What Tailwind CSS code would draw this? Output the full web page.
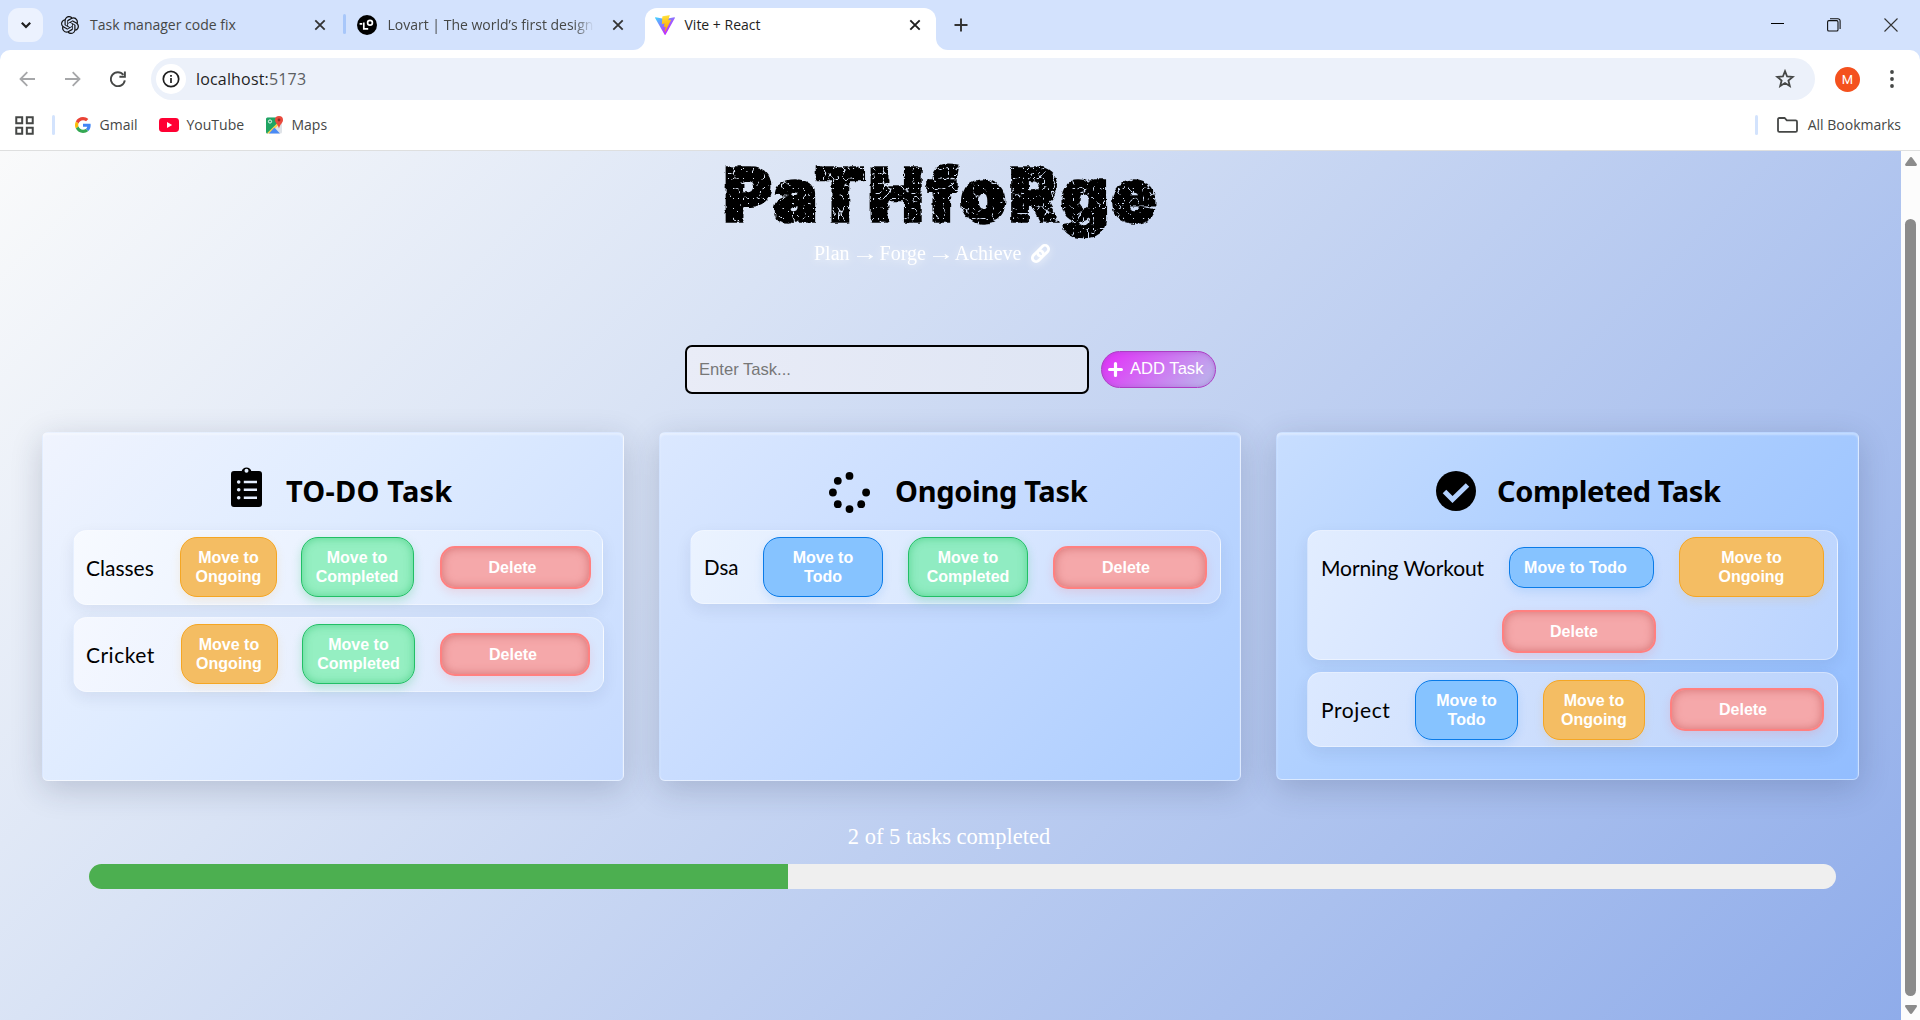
<!DOCTYPE html>
<html lang="en">
<head>
<meta charset="utf-8">
<title>Vite + React</title>
<script src="https://cdn.jsdelivr.net/npm/@tailwindcss/browser@4"></script>
</head>
<body class="w-[1920px] h-[1020px] overflow-hidden flex flex-col bg-[#d3e2fd] text-black font-['Open_Sans',sans-serif]">

<!-- Tab strip -->
<header class="h-[50px] shrink-0 flex text-[14px] leading-5 text-[#454746]">
  <button class="ml-2 mt-2 w-[35px] h-[34px] rounded-[11px] bg-[#ecf2fe] grid place-items-center">
    <svg class="w-4 h-4" viewBox="0 0 16 16" fill="none" stroke="#1f1f1f" stroke-width="2.2"><path d="M3.8 5.8 8 10l4.2-4.2"/></svg>
  </button>
  <div class="ml-[18px] w-[275px] h-[50px] flex items-center">
    <svg class="w-[18px] h-[18px] shrink-0" viewBox="0 0 24 24" fill="#111"><path d="M22.2819 9.8211a5.9847 5.9847 0 0 0-.5157-4.9108 6.0462 6.0462 0 0 0-6.5098-2.9A6.0651 6.0651 0 0 0 4.9807 4.1818a5.9847 5.9847 0 0 0-3.9977 2.9 6.0462 6.0462 0 0 0 .7427 7.0966 5.98 5.98 0 0 0 .511 4.9107 6.051 6.051 0 0 0 6.5146 2.9001A5.9847 5.9847 0 0 0 13.2599 24a6.0557 6.0557 0 0 0 5.7718-4.2058 5.9894 5.9894 0 0 0 3.9977-2.9001 6.0557 6.0557 0 0 0-.7475-7.073zm-9.022 12.6081a4.4755 4.4755 0 0 1-2.8764-1.0408l.1419-.0804 4.7783-2.7582a.7948.7948 0 0 0 .3927-.6813v-6.7369l2.02 1.1686a.071.071 0 0 1 .038.052v5.5826a4.504 4.504 0 0 1-4.4945 4.4944zm-9.6607-4.1254a4.4708 4.4708 0 0 1-.5346-3.0137l.142.0852 4.783 2.7582a.7712.7712 0 0 0 .7806 0l5.8428-3.3685v2.3324a.0804.0804 0 0 1-.0332.0615L9.74 19.9502a4.4992 4.4992 0 0 1-6.1408-1.6464zM2.3408 7.8956a4.485 4.485 0 0 1 2.3655-1.9728V11.6a.7664.7664 0 0 0 .3879.6765l5.8144 3.3543-2.0201 1.1685a.0757.0757 0 0 1-.071 0l-4.8303-2.7865A4.504 4.504 0 0 1 2.3408 7.872zm16.5963 3.8558L13.1038 8.364 15.1192 7.2a.0757.0757 0 0 1 .071 0l4.8303 2.7913a4.4944 4.4944 0 0 1-.6765 8.1042v-5.6772a.79.79 0 0 0-.407-.667zm2.0107-3.0231l-.142-.0852-4.7735-2.7818a.7759.7759 0 0 0-.7854 0L9.409 9.2297V6.8974a.0662.0662 0 0 1 .0284-.0615l4.8303-2.7866a4.4992 4.4992 0 0 1 6.6802 4.66zM8.3065 12.863l-2.02-1.1638a.0804.0804 0 0 1-.038-.0567V6.0742a4.4992 4.4992 0 0 1 7.3757-3.4537l-.142.0805L8.704 5.459a.7948.7948 0 0 0-.3927.6813zm1.0976-2.3654l2.602-1.4998 2.6069 1.4998v2.9994l-2.5974 1.4997-2.6067-1.4997Z"/></svg>
    <span class="ml-[11px] w-[224px]">Task manager code fix</span>
    <svg class="w-3 h-3" viewBox="0 0 12 12" stroke="#333" stroke-width="1.8"><path d="M1.3 1.3l9.4 9.4M10.7 1.3 1.3 10.7"/></svg>
  </div>
  <div class="ml-[7px] mt-[14px] w-[2.5px] h-5 rounded bg-[#a8c7fa]"></div>
  <div class="ml-[11px] w-[288px] h-[50px] flex items-center">
    <svg class="w-5 h-5 shrink-0" viewBox="0 0 20 20"><circle cx="10" cy="10" r="10" fill="#000"/><g fill="none" stroke="#fff" stroke-width="1.7"><path d="M2.6 8.8h2.6M6.8 7.6v6.2h4.4"/><circle cx="13" cy="7.8" r="2.4"/></g></svg>
    <span class="ml-[11px] w-[206px] whitespace-nowrap mask-r-from-90%">Lovart | The world’s first design</span>
    <svg class="ml-[18px] w-3 h-3" viewBox="0 0 12 12" stroke="#333" stroke-width="1.8"><path d="M1.3 1.3l9.4 9.4M10.7 1.3 1.3 10.7"/></svg>
  </div>
  <div class="-ml-[12px] flex items-end">
    <svg class="w-3 h-3" viewBox="0 0 12 12"><path d="M12 0v12H0A12 12 0 0 0 12 0z" fill="#fff"/></svg>
    <div class="w-[291px] h-[42px] rounded-t-[12px] bg-white flex items-center pb-[8px] text-[#1f1f1f]">
      <svg class="ml-[10px] w-5 h-5" viewBox="0 0 256 257"><defs><linearGradient id="va" x1="-.8%" x2="57.6%" y1="7.7%" y2="78.4%"><stop stop-color="#41D1FF"/><stop offset="1" stop-color="#BD34FE"/></linearGradient><linearGradient id="vb" x1="43.4%" x2="50.3%" y1="2.2%" y2="89%"><stop stop-color="#FFEA83"/><stop offset=".08" stop-color="#FFDD35"/><stop offset="1" stop-color="#FFA800"/></linearGradient></defs><path fill="url(#va)" d="M255.153 37.938 134.897 252.976c-2.483 4.44-8.862 4.466-11.382.048L.875 37.958c-2.746-4.814 1.371-10.646 6.827-9.67l120.385 21.517a6.537 6.537 0 0 0 2.322-.004l117.867-21.483c5.438-.991 9.574 4.796 6.877 9.62Z"/><path fill="url(#vb)" d="M185.432.063 96.44 17.501a3.268 3.268 0 0 0-2.634 3.014l-5.474 92.456a3.268 3.268 0 0 0 3.997 3.378l24.777-5.718c2.318-.535 4.413 1.507 3.936 3.838l-7.361 36.047c-.495 2.426 1.782 4.5 4.151 3.78l15.304-4.649c2.372-.72 4.652 1.36 4.15 3.788l-11.698 56.621c-.732 3.542 3.979 5.473 5.943 2.437l1.313-2.028 72.516-144.72c1.215-2.423-.88-5.186-3.54-4.672l-25.505 4.922c-2.396.462-4.435-1.77-3.759-4.114l16.646-57.705c.677-2.35-1.37-4.583-3.769-4.113Z"/></svg>
      <span class="ml-[10px] w-[224px]">Vite + React</span>
      <svg class="w-3 h-3" viewBox="0 0 12 12" stroke="#1f1f1f" stroke-width="1.9"><path d="M1.3 1.3l9.4 9.4M10.7 1.3 1.3 10.7"/></svg>
    </div>
    <svg class="w-3 h-3" viewBox="0 0 12 12"><path d="M0 0v12h12A12 12 0 0 1 0 0z" fill="#fff"/></svg>
  </div>
  <svg class="ml-[6px] mt-[18px] w-[14px] h-[14px]" viewBox="0 0 14 14" stroke="#333" stroke-width="1.9"><path d="M7 .5v13M.5 7h13"/></svg>
  <div class="ml-auto mr-[22px] flex">
    <svg class="mt-[18px] w-[13px] h-[13px]" viewBox="0 0 13 13" stroke="#000" stroke-width="1"><path d="M0 5.500h13"/></svg>
    <svg class="ml-[43px] mt-[18px] w-[14px] h-[14px]" viewBox="0 0 14 14" fill="none" stroke="#111" stroke-width="1.1"><rect x=".6" y="2.6" width="10.4" height="10.4" rx="1.3"/><path d="M3 .8h7.700a2.200 2.200 0 0 1 2.400 2.400V11"/></svg>
    <svg class="ml-[43px] mt-[18px] w-[14px] h-[14px]" viewBox="0 0 14 14" stroke="#333" stroke-width="1.1"><path d="m.5.5 13 13M13.500.5l-13 13"/></svg>
  </div>
</header>

<!-- Toolbar and bookmarks -->
<div class="h-[101px] shrink-0 rounded-t-[10px] bg-white border-b border-[#dedfdf] flex flex-col">
  <div class="mt-2 h-[42px] flex items-center">
    <svg class="ml-[19px] w-4 h-4" viewBox="0 0 16 16" fill="none" stroke="#a6a7a9" stroke-width="1.8"><path d="M16 8H2M8.300 1.200 1.500 8l6.800 6.800"/></svg>
    <svg class="ml-[30px] w-4 h-4" viewBox="0 0 16 16" fill="none" stroke="#a6a7a9" stroke-width="1.8"><path d="M0 8h14M7.700 1.200 14.500 8l-6.800 6.800"/></svg>
    <svg class="ml-[29px] w-4 h-4" viewBox="0 0 16 16" fill="none" stroke="#454746" stroke-width="1.9"><path d="M14.800 9.300A7 7 0 1 1 13.400 3.900"/><path d="M14.900.4v5.400H9.400"/></svg>
    <div class="ml-[25px] w-[1664px] h-[42px] rounded-full bg-[#ecf1fa] flex items-center">
      <div class="ml-[5px] w-[30px] h-[30px] rounded-full bg-white grid place-items-center">
        <svg class="w-[18px] h-[18px]" viewBox="0 0 18 18" fill="none" stroke="#1f1f1f" stroke-width="1.7"><circle cx="9" cy="9" r="7.7"/><path d="M9 8v5M9 5v1.800"/></svg>
      </div>
      <span class="ml-[10px] text-[16px] tracking-[.17px] text-[#1f1f1f]">localhost:<span class="text-[#5b5e62]">5173</span></span>
      <svg class="ml-auto mr-[20px] w-[20px] h-[20px]" viewBox="0 0 20 20" fill="none" stroke="#454746" stroke-width="1.8"><path d="m10 2.200 2.100 5.300 5.600.4-4.300 3.600 1.400 5.600-4.800-3.100-4.800 3.100 1.400-5.600-4.300-3.600 5.600-.4z"/></svg>
    </div>
    <div class="ml-5 w-[25px] h-[25px] rounded-full bg-[#f4511e] text-white text-[13px] leading-[25px] text-center font-[Roboto]">M</div>
    <svg class="ml-[30px] w-1 h-[18px]" viewBox="0 0 4 18" fill="#454746"><circle cx="2" cy="2" r="1.9"/><circle cx="2" cy="9" r="1.9"/><circle cx="2" cy="16" r="1.9"/></svg>
  </div>
  <div class="mt-[15px] h-5 flex items-center text-[14px] leading-5 text-[#454746]">
    <svg class="ml-[15px] w-[19px] h-[19px]" viewBox="0 0 18 18" fill="none" stroke="#454746" stroke-width="1.9"><path d="M1.200 1.200h5.600v5.600H1.200zM11.200 1.200h5.600v5.600h-5.600zM1.200 11.200h5.600v5.600H1.200zM11.200 11.200h5.600v5.600h-5.600z"/></svg>
    <div class="ml-[18px] w-[2.500px] h-5 rounded bg-[#d3e3fd]"></div>
    <svg class="ml-[20px] w-4 h-4" viewBox="0 0 48 48"><path fill="#EA4335" d="M24 9.5c3.54 0 6.71 1.22 9.21 3.6l6.85-6.85C35.9 2.38 30.47 0 24 0 14.62 0 6.51 5.38 2.56 13.22l7.98 6.19C12.43 13.72 17.74 9.5 24 9.5z"/><path fill="#4285F4" d="M46.98 24.55c0-1.57-.15-3.09-.38-4.55H24v9.02h12.94c-.58 2.96-2.26 5.48-4.78 7.18l7.73 6c4.51-4.18 7.09-10.36 7.09-17.65z"/><path fill="#FBBC05" d="M10.53 28.59c-.48-1.45-.76-2.99-.76-4.59s.27-3.14.76-4.59l-7.98-6.19C.92 16.46 0 20.12 0 24c0 3.88.92 7.54 2.56 10.78l7.97-6.19z"/><path fill="#34A853" d="M24 48c6.48 0 11.93-2.13 15.89-5.81l-7.73-6c-2.15 1.45-4.92 2.3-8.16 2.3-6.26 0-11.57-4.22-13.47-9.91l-7.98 6.19C6.51 42.62 14.62 48 24 48z"/></svg>
    <span class="ml-[9px] w-[59px]">Gmail</span>
    <svg class="w-5 h-[14px]" viewBox="0 0 20 14"><rect width="20" height="14" rx="3.4" fill="#f03"/><path d="M8 4v6l5.200-3z" fill="#fff"/></svg>
    <span class="ml-[8px] w-[79px]">YouTube</span>
    <svg class="w-[17px] h-[18px]" viewBox="0 0 17 18"><rect y="1.5" width="16" height="16" rx="1.5" fill="#dfe3e8"/><path d="M0 3A1.500 1.500 0 0 1 1.500 1.500H10L12 7 1.500 17.500A1.500 1.500 0 0 1 0 16z" fill="#1fa463"/><path d="M1 17.300 12 6.500l1.500 1.500L4 17.500z" fill="#fcd04b"/><path d="m8.300 11.500 5.700 6H3z" fill="#4a8af4"/><circle cx="4" cy="5.5" r="1.6" fill="none" stroke="#fff" stroke-width=".9"/><path d="M13 0a4 4 0 0 1 4 4c0 3-3 4-4 8.500C12 8 9 7 9 4a4 4 0 0 1 4-4z" fill="#ea4a3d"/><circle cx="13" cy="4" r="1.4" fill="#8e2a22"/></svg>
    <span class="ml-[9px]">Maps</span>
    <div class="ml-auto w-[2.500px] h-5 rounded bg-[#d3e3fd]"></div>
    <svg class="ml-[19px] w-[21px] h-4" viewBox="0 0 21 16" fill="none" stroke="#454746" stroke-width="1.8"><path d="M2.400 1h5.200l2.200 2.400h8.800c.9 0 1.400.6 1.400 1.400v8.600c0 .9-.5 1.500-1.400 1.500H2.400c-.9 0-1.400-.6-1.400-1.500V2.500C1 1.600 1.500 1 2.400 1z"/></svg>
    <span class="ml-[10px] mr-[19px]">All Bookmarks</span>
  </div>
</div>

<!-- Viewport -->
<div class="h-[869px] flex">
<main class="w-[1901px] h-full flex flex-col overflow-hidden bg-[linear-gradient(135deg,#fcfcfb_-2.5%,#d9e3f5_32%,#8facea_100%)]">

  <svg class="hidden">
    <filter id="distress" x="-2%" y="-10%" width="104%" height="125%">
      <feTurbulence type="fractalNoise" baseFrequency=".16" numOctaves="3" seed="8" result="n"/>
      <feDisplacementMap in="SourceGraphic" in2="n" scale="4" xChannelSelector="R" yChannelSelector="G" result="rough"/>
      <feTurbulence type="turbulence" baseFrequency=".1" numOctaves="2" seed="4"/>
      <feColorMatrix values="0 0 0 0 0  0 0 0 0 0  0 0 0 0 0  -18 0 0 0 1.5" result="cracks"/>
      <feComposite in="rough" in2="cracks" operator="out"/>
    </filter>
  </svg>
  <h1 class="ml-[724px] mt-[8px] h-[72px] w-[460px] whitespace-nowrap text-[72.500px] leading-none font-black font-[Inter] tracking-[3.800px] [-webkit-text-stroke:3.500px_#000] [filter:url(#distress)]">PaTHfoRge</h1>

  <div class="ml-[814px] mt-[10px] h-6 flex items-center text-white text-[20px] leading-6 font-['Liberation_Serif',serif] [filter:drop-shadow(0_2px_4px_#ffffffb0)]">
    <span class="whitespace-nowrap">Plan <span class="inline-block scale-x-[1.350]">→</span> Forge <span class="inline-block scale-x-[1.350]">→</span> Achieve</span>
    <svg class="ml-[9px] mt-[1px] w-[21px] h-[21px]" viewBox="0 0 21 21" fill="none" stroke="#fff" stroke-width="2.8"><rect x="-6.300" y="-3.700" width="12.600" height="7.400" rx="3.700" transform="translate(13.100 7.900) rotate(-45)"/><rect x="-6.300" y="-3.700" width="12.600" height="7.400" rx="3.700" transform="translate(7.900 13.100) rotate(-45)"/></svg>
  </div>

  <div class="ml-[685px] mt-[80px] h-[49px] flex items-center gap-[12px] font-['Liberation_Sans',sans-serif] text-[16.600px]">
    <div class="w-[404px] h-[49px] rounded-[7px] border-2 border-black bg-[linear-gradient(100deg,#e9ecf7,#dee5f4)] pl-[12px] leading-[45px] text-[#777]">Enter Task...</div>
    <button class="w-[115px] h-[37px] rounded-full border border-[#ad3cc4] bg-[linear-gradient(135deg,#e038f8_8%,#bdb2ec_92%)] shadow-[inset_0_0_5px_#8f4fc080] flex items-center pl-[6px] pb-px text-white">
      <svg class="w-[15px] h-[15px]" viewBox="0 0 15 15" stroke="#fff" stroke-width="3.2" stroke-linecap="round"><path d="M7.500 1.600v11.800M1.600 7.500h11.800"/></svg>
      <span class="ml-[7px] whitespace-nowrap">ADD Task</span>
    </button>
  </div>

  <div class="ml-[42px] mt-[38px] h-[349px] flex items-start gap-[35px] font-['Liberation_Sans',sans-serif] text-[16px] leading-[19px] font-bold">

    <section class="w-[582px] h-[349px] rounded-[6px] border border-white/35 bg-[linear-gradient(135deg,#f0f4fe,#deebff_42%,#c5daff)] shadow-[0_8px_32px_rgba(31,38,75,.2),inset_0_2px_2px_rgba(255,255,255,.35)] flex flex-col">
      <div class="mt-[33px] ml-[188px] h-[64px] flex items-start">
        <svg class="w-[31px] h-[41px]" viewBox="0 0 31 41"><path fill-rule="evenodd" d="M3 5h7.700a5 5 0 0 1 9.600 0H28a3 3 0 0 1 3 3v30a3 3 0 0 1-3 3H3a3 3 0 0 1-3-3V8a3 3 0 0 1 3-3zm12.500-2.300a2 2 0 1 0 0 4 2 2 0 0 0 0-4z"/><g fill="#e4eeff"><circle cx="7.7" cy="16" r="1.8"/><circle cx="7.7" cy="23.7" r="1.8"/><circle cx="7.7" cy="31.7" r="1.8"/><path d="M12.800 14.700H26v2.600H12.800zM12.800 22.400H26V25H12.800zM12.800 30.400H26V33H12.800z"/></g></svg>
        <h2 class="ml-[24px] mt-[5px] text-[29px] leading-10 font-['Noto_Sans',sans-serif] tracking-[.2px] whitespace-nowrap">TO-DO Task</h2>
      </div>
      <div class="ml-[30px] w-[530px] h-[75px] rounded-[14px] border border-white/35 bg-[linear-gradient(120deg,#f7faff,#e9f1ff_50%,#d9e8ff)] shadow-[0_6px_16px_rgba(31,38,75,.08)] flex items-center pb-px text-white text-center">
        <span class="ml-[12px] w-[94px] text-left font-[Lato] font-normal text-[21px] text-black mt-px">Classes</span>
        <button class="w-[97px] h-[60px] rounded-[17px] border border-[#f5a623] bg-[#f4bd63] shadow-[0_4px_10px_#f5a62320]">Move to<br>Ongoing</button>
        <button class="ml-[24px] w-[113px] h-[60px] rounded-[17px] border border-[#22bf66] bg-[#95efc2] shadow-[inset_0_0_9px_#3fc97bb0,0_4px_10px_#22c06440] pr-px">Move to<br>Completed</button>
        <button class="ml-[26px] w-[151px] h-[43px] rounded-[15px] border-2 border-[#ff8080] bg-[#f5a8aa] shadow-[inset_0_0_10px_#c85c5caa,0_4px_10px_#ff505025] mt-px pr-[6px]">Delete</button>
      </div>
      <div class="ml-[30px] mt-[12px] w-[531px] h-[75px] rounded-[14px] border border-white/35 bg-[linear-gradient(120deg,#f5f8ff,#e7effe_50%,#d7e6ff)] shadow-[0_6px_16px_rgba(31,38,75,.08)] flex items-center pb-px text-white text-center">
        <span class="ml-[12px] w-[95px] text-left font-[Lato] font-normal text-[21px] tracking-[.5px] text-black mt-px">Cricket</span>
        <button class="w-[97px] h-[60px] rounded-[17px] border border-[#f5a623] bg-[#f4bd63] shadow-[0_4px_10px_#f5a62320] pr-px">Move to<br>Ongoing</button>
        <button class="ml-[24px] w-[113px] h-[60px] rounded-[17px] border border-[#22bf66] bg-[#95efc2] shadow-[inset_0_0_9px_#3fc97bb0,0_4px_10px_#22c06440]">Move to<br>Completed</button>
        <button class="ml-[25px] w-[150px] h-[43px] rounded-[15px] border-2 border-[#ff8080] bg-[#f5a8aa] shadow-[inset_0_0_10px_#c85c5caa,0_4px_10px_#ff505025] mt-px pr-[4px]">Delete</button>
      </div>
    </section>

    <section class="w-[582px] h-[349px] rounded-[6px] border border-white/35 bg-[linear-gradient(135deg,#dbe8ff,#c6dbff_45%,#aaccff)] shadow-[0_8px_32px_rgba(31,38,75,.2),inset_0_2px_2px_rgba(255,255,255,.35)] flex flex-col">
      <div class="mt-[33px] ml-[169px] h-[64px] flex items-start">
        <svg class="mt-[6px] w-[41px] h-[41px]" viewBox="0 0 41 41"><circle cx="20.5" cy="3.9" r="3.9"/><circle cx="8.8" cy="8.8" r="3.9"/><circle cx="3.9" cy="20.5" r="3.9"/><circle cx="8.8" cy="32.2" r="3.9"/><circle cx="20.5" cy="37.1" r="3.9"/><circle cx="32.2" cy="32.2" r="3.9"/><circle cx="37.1" cy="20.5" r="3.9"/></svg>
        <h2 class="ml-[25px] mt-[5px] text-[29px] leading-10 font-['Noto_Sans',sans-serif] tracking-[-.3px] whitespace-nowrap">Ongoing Task</h2>
      </div>
      <div class="ml-[30px] w-[531px] h-[74px] rounded-[14px] border border-white/35 bg-[linear-gradient(120deg,#ebf3ff,#dae8ff_50%,#c8dbff)] shadow-[0_6px_16px_rgba(31,38,75,.08)] flex items-center text-white text-center">
        <span class="ml-[13px] w-[59px] text-left font-[Lato] font-normal text-[20.500px] text-black mt-px">Dsa</span>
        <button class="w-[120px] h-[60px] rounded-[17px] border border-[#0a7be8] bg-[#86c3ff] shadow-[0_4px_10px_#0a7be820]">Move to<br>Todo</button>
        <button class="ml-[25px] w-[120px] h-[60px] rounded-[17px] border border-[#22bf66] bg-[#90ecc2] shadow-[inset_0_0_9px_#3fc97bb0,0_4px_10px_#22c06440]">Move to<br>Completed</button>
        <button class="ml-[25px] w-[154px] h-[43px] rounded-[15px] border-2 border-[#ff8080] bg-[#f5a8aa] shadow-[inset_0_0_10px_#c85c5caa,0_4px_10px_#ff505025] mt-px pr-[8px]">Delete</button>
      </div>
    </section>

    <section class="w-[583px] h-[348px] rounded-[6px] border border-white/35 bg-[linear-gradient(135deg,#c8deff,#acceff_45%,#92bdff)] shadow-[0_8px_32px_rgba(31,38,75,.2),inset_0_2px_2px_rgba(255,255,255,.35)] flex flex-col">
      <div class="mt-[33px] ml-[159px] h-[64px] flex items-start">
        <svg class="mt-[5px] w-[40px] h-[40px]" viewBox="0 0 40 40"><circle cx="20" cy="20" r="20"/><path d="m8.500 20.500 8 8L31.500 14" fill="none" stroke="#b3d1ff" stroke-width="5"/></svg>
        <h2 class="ml-[21px] mt-[5px] text-[29px] leading-10 font-['Noto_Sans',sans-serif] tracking-[-.42px] whitespace-nowrap">Completed Task</h2>
      </div>
      <div class="ml-[30px] w-[531px] h-[130px] rounded-[14px] border border-white/35 bg-[linear-gradient(120deg,#e2edff,#cfe0ff_50%,#b9d3fe)] shadow-[0_6px_16px_rgba(31,38,75,.08)] flex flex-col text-white text-center">
        <div class="mt-[6px] h-[60px] flex items-center">
          <span class="ml-[13px] w-[188px] text-left font-[Lato] font-normal text-[21px] tracking-[-.1px] text-black mt-px">Morning Workout</span>
          <button class="w-[145px] h-[41px] rounded-[15px] border border-[#0a7be8] bg-[#86c3ff] shadow-[0_4px_10px_#0a7be820] pr-[12px] whitespace-nowrap">Move to Todo</button>
          <button class="ml-[25px] w-[145px] h-[60px] rounded-[17px] border border-[#f5a623] bg-[#f4bd63] shadow-[0_4px_10px_#f5a62320]">Move to<br>Ongoing</button>
        </div>
        <button class="ml-[194px] mt-[13px] w-[154px] h-[43px] rounded-[15px] border-2 border-[#ff8080] bg-[#f5a8aa] shadow-[inset_0_0_10px_#c85c5caa,0_4px_10px_#ff505025] pr-[10px]">Delete</button>
      </div>
      <div class="ml-[30px] mt-[12px] w-[531px] h-[75px] rounded-[14px] border border-white/35 bg-[linear-gradient(120deg,#dce9ff,#cbddfd_50%,#b9d2fc)] shadow-[0_6px_16px_rgba(31,38,75,.08)] flex items-center text-white text-center">
        <span class="ml-[13px] w-[94px] text-left font-[Lato] font-normal text-[21px] tracking-[.6px] text-black">Project</span>
        <button class="w-[103px] h-[60px] rounded-[17px] border border-[#0a7be8] bg-[#86c3ff] shadow-[0_4px_10px_#0a7be820]">Move to<br>Todo</button>
        <button class="ml-[25px] w-[102px] h-[60px] rounded-[17px] border border-[#f5a623] bg-[#f4bd63] shadow-[0_4px_10px_#f5a62320]">Move to<br>Ongoing</button>
        <button class="ml-[25px] w-[154px] h-[43px] rounded-[15px] border-2 border-[#ff8080] bg-[#f5a8aa] shadow-[inset_0_0_10px_#c85c5caa,0_4px_10px_#ff505025] pr-[8px]">Delete</button>
      </div>
    </section>
  </div>

  <p class="mt-[42px] h-7 pr-[3px] text-center text-white text-[22.500px] leading-7 font-['Liberation_Serif',serif]">2 of 5 tasks completed</p>
  <div class="ml-[89px] mt-[13px] w-[1747px] h-[25px] rounded-[13px] bg-[#efefef] overflow-hidden">
    <div class="h-full bg-[#4caf50]" style="width:40%"></div>
  </div>
</main>

<!-- Scrollbar -->
<aside class="w-[19px] h-full bg-[#fcfcfc] flex flex-col items-center">
  <svg class="mt-[6px] w-[12px] h-[9px]" viewBox="0 0 12 9" fill="#8b8b8b"><path d="M6 0c.6 0 1 .4 1.400.9L11.700 7c.5.900.2 2-1 2H1.300C.1 9-.2 7.900.3 7L4.600.9C5 .4 5.400 0 6 0z"/></svg>
  <div class="mt-[53px] w-[11px] h-[777px] rounded-full bg-[#8b8b8b]"></div>
  <svg class="mt-[9px] w-[12px] h-[9px]" viewBox="0 0 12 9" fill="#8b8b8b"><path d="M6 9c.6 0 1-.4 1.400-.9L11.700 2c.5-.9.2-2-1-2H1.300C.1 0-.2 1.100.3 2l4.300 6.100C5 8.600 5.400 9 6 9z"/></svg>
</aside>
</div>
</body>
</html>
